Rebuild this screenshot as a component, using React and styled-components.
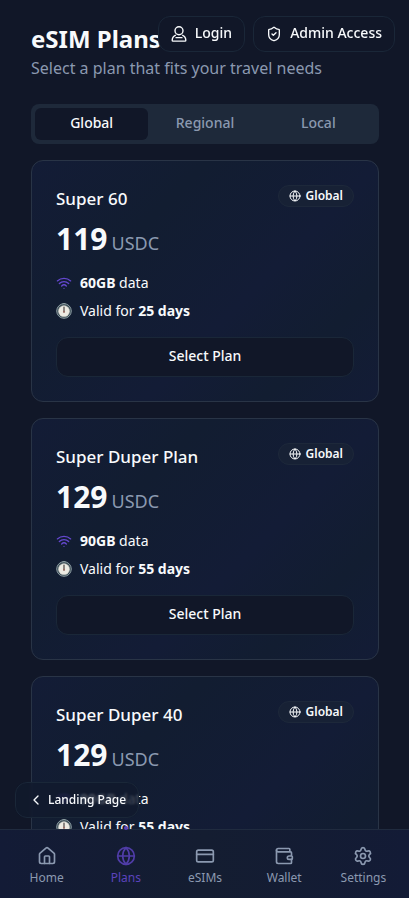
import React, { useState } from "react";
import styled, { createGlobalStyle, css } from "styled-components";
import { House, Globe, CreditCard, Wallet, Settings, Wifi, ChevronLeft, ShieldCheck } from "lucide-react";

const GlobalStyle = createGlobalStyle`
  *, *::before, *::after { box-sizing: border-box; }
  body {
    margin: 0;
    background: #111728;
    color: #f8fafc;
    font-family: "Noto Sans", sans-serif;
    font-size: 14px;
    line-height: 20px;
  }
  h1, h2, p, ul { margin: 0; padding: 0; }
  button { font: inherit; color: inherit; cursor: pointer; }
  a { color: inherit; text-decoration: none; }
`;

const Shell = styled.div`
  display: flex;
  flex-direction: column;
  height: 100vh;
`;

const Main = styled.main`
  flex: 1;
  min-height: 0;
  overflow-y: auto;
  scrollbar-width: none;
  padding: 24px 30px 24px 31px;
`;

const Title = styled.h1`
  font-size: 24px;
  line-height: 30px;
  font-weight: 700;
  margin-bottom: 2px;
`;

const Subtitle = styled.p`
  font-size: 16px;
  line-height: 24px;
  color: #8b99b0;
  margin-bottom: 24px;
`;

const Tabs = styled.div`
  display: grid;
  grid-template-columns: repeat(3, 1fr);
  padding: 4px;
  border-radius: 8px;
  background: #1e293a;
  margin-bottom: 16px;
`;

const Tab = styled.button`
  height: 32px;
  padding: 0 0 2px;
  border: 0;
  border-radius: 6px;
  font-weight: 500;
  background: ${(p) => (p.$active ? "#111728" : "transparent")};
  color: ${(p) => (p.$active ? "#f8fafc" : "#8b99b0")};
`;

const Plans = styled.div`
  display: flex;
  flex-direction: column;
  gap: 16px;
`;

const Card = styled.article`
  border: 1px solid #293446;
  border-radius: 12px;
  padding: 24px;
  background: linear-gradient(135deg, #131c36, #121d31 30%, #131c36 60%, #121d31 80%, #131c36);
`;

const CardHead = styled.div`
  display: flex;
  justify-content: space-between;
  align-items: flex-start;
  margin-bottom: 8px;
`;

const PlanName = styled.h2`
  font-size: 17px;
  line-height: 28px;
  font-weight: 500;
`;

const Badge = styled.span`
  display: inline-flex;
  align-items: center;
  gap: 5px;
  height: 22px;
  padding: 0 10px;
  border: 1px solid #1d283a;
  border-radius: 11px;
  background: #172135;
  font-size: 12px;
  line-height: 16px;
  font-weight: 600;
`;

const Price = styled.p`
  font-size: 30px;
  line-height: 36px;
  font-weight: 700;
  margin-bottom: 12px;
`;

const Currency = styled.span`
  margin-left: 4px;
  font-size: 18px;
  font-weight: 400;
  color: #8b99b0;
`;

const Features = styled.ul`
  list-style: none;
  display: grid;
  gap: 8px;
  margin-bottom: 16px;
`;

const Feature = styled.li`
  display: flex;
  align-items: center;
  gap: 8px;

  svg { flex: none; }
`;

const outlined = css`
  border: 1px solid #1a2738;
  border-radius: 12px;
  background: #111728;
  font-weight: 500;
`;

const SelectButton = styled.button`
  ${outlined}
  width: 100%;
  height: 40px;
  padding: 0 0 2px;
`;

const TopActions = styled.div`
  position: fixed;
  top: 16px;
  right: 14px;
  display: flex;
  gap: 8px;
`;

const ActionButton = styled.button`
  ${outlined}
  display: flex;
  align-items: center;
  gap: 8px;
  height: 36px;
  padding: 0 12px;
  line-height: 18px;

  span { padding-bottom: 2px; }
`;

const BackLink = styled.a`
  ${outlined}
  position: fixed;
  left: 15px;
  bottom: 80px;
  display: flex;
  align-items: center;
  gap: 4px;
  height: 36px;
  padding: 0 12px;
  background: rgba(17, 26, 45, 0.78);
  backdrop-filter: blur(1px);
  font-size: 12px;
`;

const BottomNav = styled.nav`
  position: relative;
  display: grid;
  grid-template-columns: repeat(5, 1fr);
  padding: 16px 6px 12px 7px;
  border-top: 1px solid #202b3f;
  background: linear-gradient(90deg, #131b36, #141d31 50%, #131b36);
`;

const NavLink = styled.a`
  position: relative;
  display: flex;
  flex-direction: column;
  align-items: center;
  gap: 4px;
  font-size: 12px;
  line-height: 16px;
  color: ${(p) => (p.$active ? "#5b43bd" : "#8b99b0")};

  svg { opacity: ${(p) => (p.$active ? 0.85 : 1)}; }
`;

const ActiveDot = styled.span`
  position: absolute;
  top: -20px;
  width: 4px;
  height: 4px;
  border-radius: 50%;
  background: #5b43bd;
`;

function UserIcon() {
  return (
    <svg width="16" height="16" viewBox="0 0 16 16" fill="none" stroke="currentColor" strokeWidth="1.4" strokeLinejoin="round" aria-hidden="true">
      <circle cx="8" cy="4.700" r="4" />
      <path d="M4.800 9.200C2.700 10.200 1.200 12 1.200 14.200c0 .6.3.9.8.9h12c.5 0 .8-.3.8-.9 0-2.200-1.500-4-3.600-5M4.500 11.600h7" />
    </svg>
  );
}

function StopwatchIcon() {
  return (
    <svg width="16" height="16" viewBox="0 0 16 16" fill="none" aria-hidden="true">
      <rect x="6.500" y="0" width="3" height="2" rx=".6" fill="#8b9c9f" />
      <circle cx="8" cy="8" r="7.300" fill="#34464f" stroke="#8d9da3" strokeWidth="1" />
      <circle cx="8" cy="8.200" r="5.600" fill="#eceae2" stroke="#b9bfbc" strokeWidth=".5" />
      <path d="M8 4v5" stroke="#4a4444" strokeWidth="1.200" strokeLinecap="round" />
      <circle cx="8" cy="8.800" r="1" fill="#9b6b66" />
    </svg>
  );
}

const plans = [
  { name: "Super 60", price: 119, data: "60GB", days: 25 },
  { name: "Super Duper Plan", price: 129, data: "90GB", days: 55 },
  { name: "Super Duper 40", price: 129, data: "90GB", days: 55 },
];

const links = [
  { label: "Home", icon: House },
  { label: "Plans", icon: Globe },
  { label: "eSIMs", icon: CreditCard },
  { label: "Wallet", icon: Wallet },
  { label: "Settings", icon: Settings },
];

function PlanCard({ plan }) {
  return (
    <Card>
      <CardHead>
        <PlanName>{plan.name}</PlanName>
        <Badge><Globe size={12} />Global</Badge>
      </CardHead>
      <Price>{plan.price}<Currency>USDC</Currency></Price>
      <Features>
        <Feature><Wifi size={16} color="#6548cf" /><span><strong>{plan.data}</strong> data</span></Feature>
        <Feature><StopwatchIcon /><span>Valid for <strong>{plan.days} days</strong></span></Feature>
      </Features>
      <SelectButton type="button">Select Plan</SelectButton>
    </Card>
  );
}

export default function App() {
  const [tab, setTab] = useState("Global");
  return (
    <Shell>
      <GlobalStyle />
      <Main>
        <Title>eSIM Plans</Title>
        <Subtitle>Select a plan that fits your travel needs</Subtitle>
        <Tabs role="tablist">
          {["Global", "Regional", "Local"].map((name) => (
            <Tab key={name} type="button" role="tab" aria-selected={tab === name} $active={tab === name} onClick={() => setTab(name)}>
              {name}
            </Tab>
          ))}
        </Tabs>
        <Plans>
          {plans.map((plan) => <PlanCard key={plan.name} plan={plan} />)}
        </Plans>
      </Main>
      <TopActions>
        <ActionButton type="button"><UserIcon /><span>Login</span></ActionButton>
        <ActionButton type="button"><ShieldCheck size={16} /><span>Admin Access</span></ActionButton>
      </TopActions>
      <BackLink href="#landing"><ChevronLeft size={16} />Landing Page</BackLink>
      <BottomNav>
        {links.map(({ label, icon: Icon }) => {
          const active = label === "Plans";
          return (
            <NavLink key={label} href={"#" + label.toLowerCase()} $active={active} aria-current={active ? "page" : undefined}>
              {active && <ActiveDot />}
              <Icon size={20} />
              {label}
            </NavLink>
          );
        })}
      </BottomNav>
    </Shell>
  );
}
